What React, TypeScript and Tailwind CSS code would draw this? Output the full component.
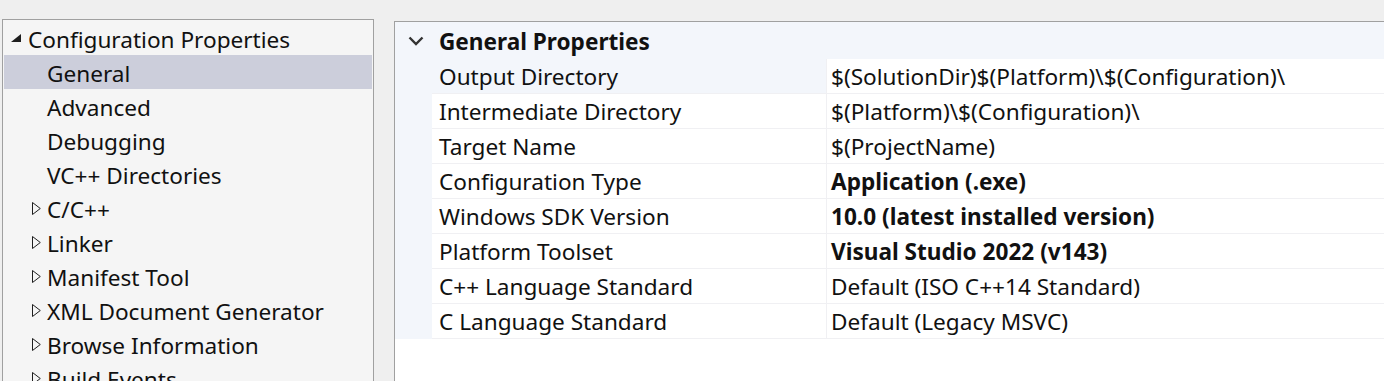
import React from "react";

const font = { fontFamily: '"Noto Sans", "Open Sans", sans-serif' };

type TreeItem = { label: string; kind: "open" | "leaf" | "closed"; selected?: boolean };

const tree: TreeItem[] = [
  { label: "Configuration Properties", kind: "open" },
  { label: "General", kind: "leaf", selected: true },
  { label: "Advanced", kind: "leaf" },
  { label: "Debugging", kind: "leaf" },
  { label: "VC++ Directories", kind: "leaf" },
  { label: "C/C++", kind: "closed" },
  { label: "Linker", kind: "closed" },
  { label: "Manifest Tool", kind: "closed" },
  { label: "XML Document Generator", kind: "closed" },
  { label: "Browse Information", kind: "closed" },
  { label: "Build Events", kind: "closed" },
];

const props: { name: string; value: string; bold?: boolean }[] = [
  { name: "Output Directory", value: "$(SolutionDir)$(Platform)\\$(Configuration)\\" },
  { name: "Intermediate Directory", value: "$(Platform)\\$(Configuration)\\" },
  { name: "Target Name", value: "$(ProjectName)" },
  { name: "Configuration Type", value: "Application (.exe)", bold: true },
  { name: "Windows SDK Version", value: "10.0 (latest installed version)", bold: true },
  { name: "Platform Toolset", value: "Visual Studio 2022 (v143)", bold: true },
  { name: "C++ Language Standard", value: "Default (ISO C++14 Standard)" },
  { name: "C Language Standard", value: "Default (Legacy MSVC)" },
];

function FilledTri() {
  return (
    <svg width="10" height="8" viewBox="0 0 10 8" className="block">
      <polygon points="10,0 10,8 0,8" fill="#1e1e1e" />
    </svg>
  );
}

function OutlineTri() {
  return (
    <svg width="9" height="13" viewBox="0 0 9 13" className="block">
      <polygon points="0.5,0.5 8.3,6.5 0.5,12.5" fill="none" stroke="#1e1e1e" strokeWidth="1" />
    </svg>
  );
}

export default function App() {
  return (
    <div
      className="w-[1384px] h-[381px] bg-[#efefef] overflow-hidden flex items-start text-[22.6px] text-[#111]"
      style={font}
    >
      {/* Left tree panel */}
      <div className="ml-[2px] mt-[19px] w-[372px] h-[400px] shrink-0 border border-[#a0a0a0] bg-[#f5f5f5] p-[1px]">
        {tree.map((t) => (
          <div
            key={t.label}
            className={`h-[34px] flex items-center ${t.selected ? "bg-[#cccedb]" : ""}`}
          >
            {t.kind === "open" ? (
              <div className="w-[24px] pl-[7px] flex items-center">
                <FilledTri />
              </div>
            ) : (
              <div className="w-[24px]" />
            )}
            {t.kind === "closed" ? (
              <div className="w-[19px] pl-[4px] flex items-center">
                <OutlineTri />
              </div>
            ) : t.kind === "leaf" ? (
              <div className="w-[19px]" />
            ) : null}
            <span className="leading-none whitespace-nowrap pt-[4px]">{t.label}</span>
          </div>
        ))}
      </div>

      {/* Right property grid */}
      <div className="ml-[20px] mt-[21px] flex-1 h-[400px] border-l border-t border-[#a0a0a0] bg-white">
        <div className="h-[37px] bg-[#f3f6fb] flex items-center">
          <div className="w-[44px] pl-[13px] flex items-center">
            <svg width="16" height="10" viewBox="0 0 16 10" className="block">
              <polyline points="1.5,1.5 8,8 14.5,1.5" fill="none" stroke="#333" strokeWidth="2.4" />
            </svg>
          </div>
          <span className="font-bold leading-none whitespace-nowrap pt-[3px]">General Properties</span>
        </div>
        <div className="flex">
          <div className="w-[37px] shrink-0 bg-[#f3f6fb]" />
          <div className="flex-1">
            {props.map((p, i) => (
              <div key={p.name} className="h-[35px] flex border-b border-[#f0f0f3]">
                <div
                  className={`w-[395px] shrink-0 pl-[7px] flex items-center border-r border-[#f0f0f3] ${
                    i === 0 ? "bg-[#f3f6fb]" : ""
                  }`}
                >
                  <span className="leading-none whitespace-nowrap pt-[3px]">{p.name}</span>
                </div>
                <div className="flex-1 pl-[4px] flex items-center">
                  <span className={`leading-none whitespace-nowrap pt-[3px] ${p.bold ? "font-bold" : ""}`}>
                    {p.value}
                  </span>
                </div>
              </div>
            ))}
          </div>
        </div>
      </div>
    </div>
  );
}
